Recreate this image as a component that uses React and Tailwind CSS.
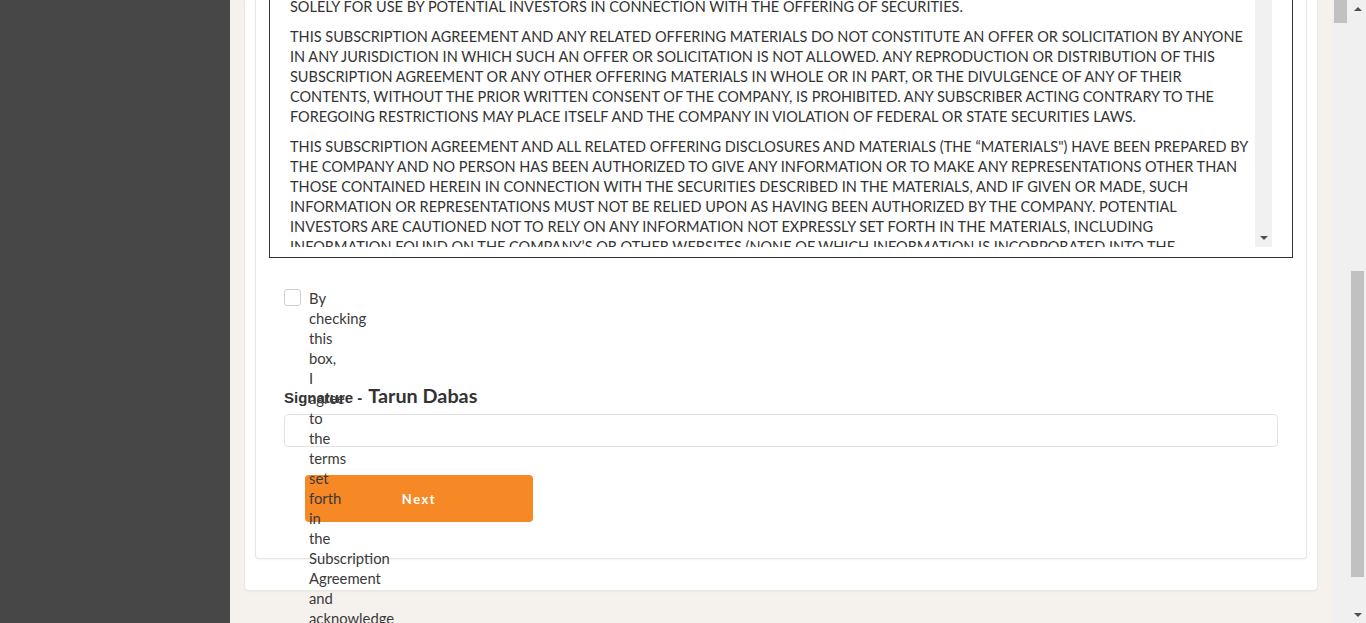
import React from 'react';

const paragraphs = [
    ['SOLELY FOR USE BY POTENTIAL INVESTORS IN CONNECTION WITH THE OFFERING OF SECURITIES.'],
    [
        'THIS SUBSCRIPTION AGREEMENT AND ANY RELATED OFFERING MATERIALS DO NOT CONSTITUTE AN OFFER OR SOLICITATION BY ANYONE',
        'IN ANY JURISDICTION IN WHICH SUCH AN OFFER OR SOLICITATION IS NOT ALLOWED. ANY REPRODUCTION OR DISTRIBUTION OF THIS',
        'SUBSCRIPTION AGREEMENT OR ANY OTHER OFFERING MATERIALS IN WHOLE OR IN PART, OR THE DIVULGENCE OF ANY OF THEIR',
        'CONTENTS, WITHOUT THE PRIOR WRITTEN CONSENT OF THE COMPANY, IS PROHIBITED. ANY SUBSCRIBER ACTING CONTRARY TO THE',
        'FOREGOING RESTRICTIONS MAY PLACE ITSELF AND THE COMPANY IN VIOLATION OF FEDERAL OR STATE SECURITIES LAWS.',
    ],
    [
        'THIS SUBSCRIPTION AGREEMENT AND ALL RELATED OFFERING DISCLOSURES AND MATERIALS (THE \u201CMATERIALS") HAVE BEEN PREPARED BY',
        'THE COMPANY AND NO PERSON HAS BEEN AUTHORIZED TO GIVE ANY INFORMATION OR TO MAKE ANY REPRESENTATIONS OTHER THAN',
        'THOSE CONTAINED HEREIN IN CONNECTION WITH THE SECURITIES DESCRIBED IN THE MATERIALS, AND IF GIVEN OR MADE, SUCH',
        'INFORMATION OR REPRESENTATIONS MUST NOT BE RELIED UPON AS HAVING BEEN AUTHORIZED BY THE COMPANY. POTENTIAL',
        'INVESTORS ARE CAUTIONED NOT TO RELY ON ANY INFORMATION NOT EXPRESSLY SET FORTH IN THE MATERIALS, INCLUDING',
        'INFORMATION FOUND ON THE COMPANY\u2019S OR OTHER WEBSITES (NONE OF WHICH INFORMATION IS INCORPORATED INTO THE',
        'MATERIALS).',
    ],
];

const ArrowUp = () => (
    <svg width="8" height="4" viewBox="0 0 8 4"><path d="M0 4 L4 0 L8 4 Z" fill="#505050" /></svg>
);

const ArrowDown = () => (
    <svg width="8" height="4" viewBox="0 0 8 4"><path d="M0 0 L8 0 L4 4 Z" fill="#505050" /></svg>
);

const App = () => {
    return (
        <div className="flex h-[623px] overflow-hidden bg-[#f5f2ee] font-['Lato',sans-serif] text-[#333]">
            {/* Sidebar */}
            <div className="w-[230px] shrink-0 bg-[#474747]"></div>

            {/* Main */}
            <div className="flex-1 px-[15px]">
                <div className="bg-white rounded-b-[4px] shadow-[0_1px_3px_rgba(0,0,0,0.08)] px-[10px] pb-[31px]">
                    <div className="border-x border-b border-[#e6e6e6] rounded-b-[4px] shadow-[0_1px_2px_rgba(0,0,0,0.05)] px-[13px] pb-[36px]">
                        {/* Agreement text box */}
                        <div className="flex h-[258px] border-x border-b border-[#333] pl-[20px] pr-[20px] pb-[10px]">
                            <div className="flex-1 overflow-hidden">
                                <div className="-mt-[3px] text-[14.5px] leading-[20px]">
                                    {paragraphs.map((lines, i) => (
                                        <p key={i} className="mb-[10px]">
                                            {lines.map((l, j) => (
                                                <span key={j} className="block whitespace-nowrap">{l}</span>
                                            ))}
                                        </p>
                                    ))}
                                </div>
                            </div>
                            <div className="w-[17px] shrink-0 bg-[#f1f1f1] flex flex-col justify-end items-center pb-[7px]">
                                <ArrowDown />
                            </div>
                        </div>

                        {/* Form */}
                        <div className="px-[15px] pt-[31px]">
                            <div className="relative z-10 flex h-[94px] gap-[8px]">
                                <div className="w-[17px] h-[17px] shrink-0 rounded-[3px] border border-[#cfcfcf] bg-white"></div>
                                <label className="-mt-[1px] w-0 text-[14.8px] leading-[20px] text-[#3a3a3a]">
                                    By checking this box, I agree to the terms set forth in the Subscription Agreement and acknowledge that I have read and understood the risks of this investment.
                                </label>
                            </div>
                            <div className="flex items-baseline gap-[6px] h-[24px] leading-[24px]">
                                <span className="font-[family-name:'Liberation_Sans',Arial,sans-serif] text-[15px] font-bold text-[#333]">Signature -</span>
                                <span className="text-[19.8px] font-bold text-[#333]">Tarun Dabas</span>
                            </div>
                            <div className="mt-[7px] h-[33px] rounded-[4px] border border-[#e3e3e3] bg-white"></div>
                            <button className="block mt-[28px] ml-[21px] w-[228px] h-[47px] pt-[2px] rounded-[4px] bg-[#f68926] text-white text-[13px] font-bold tracking-[1.5px]">
                                Next
                            </button>
                        </div>
                    </div>
                </div>
            </div>

            {/* Nested scroll track */}
            <div className="w-[17px] shrink-0 bg-[#f0f0f0] px-[2px]">
                <div className="h-[23px] bg-[#c1c1c1]"></div>
            </div>

            {/* Page scrollbar */}
            <div className="w-[17px] shrink-0 bg-[#f0f0f0] flex flex-col items-center">
                <div className="h-[17px] flex items-center justify-center"><ArrowUp /></div>
                <div className="flex-1 w-full px-[2px] pt-[254px] pb-[29px]">
                    <div className="h-full bg-[#c1c1c1]"></div>
                </div>
                <div className="h-[17px] flex items-center justify-center"><ArrowDown /></div>
            </div>
        </div>
    );
};

export default App;
